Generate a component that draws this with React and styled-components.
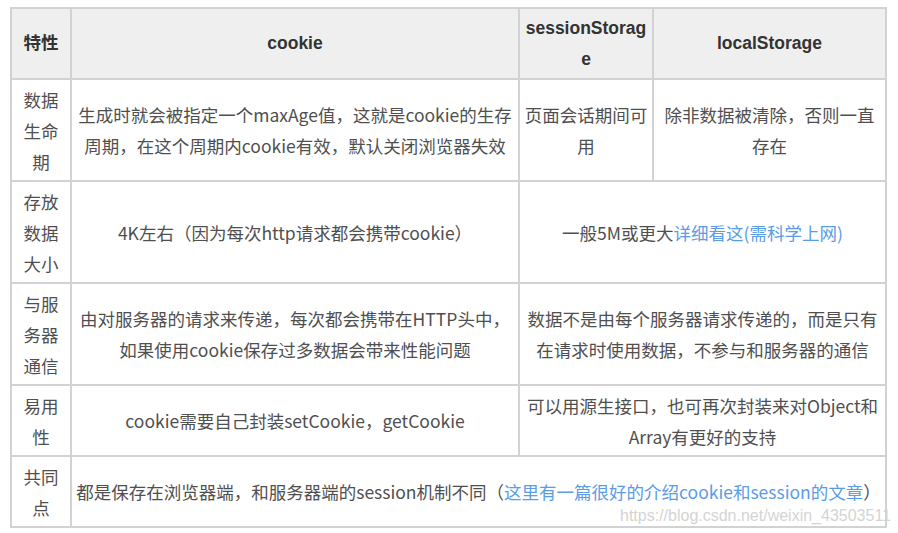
import React from "react";
import styled, { createGlobalStyle } from "styled-components";

const GlobalStyle = createGlobalStyle`
  html, body { margin: 0; padding: 0; background: #ffffff; }
  body { font-family: "Noto Sans CJK SC", sans-serif; }
`;

const Page = styled.div`
  position: relative;
  width: 898px;
  height: 533px;
  padding: 7px 0 0 10px;
  box-sizing: border-box;
  overflow: hidden;
`;

const Table = styled.table`
  width: 875px;
  table-layout: fixed;
  border-collapse: collapse;
  border: 2px solid #d2d2d2;
  font-size: 17.5px;
  line-height: 31px;
  color: #4f4f4f;
`;

const HeadCell = styled.th`
  background: #efefef;
  border: 2px solid #d2d2d2;
  padding: 3.5px 4px;
  text-align: center;
  vertical-align: middle;
  font-family: "Liberation Sans", "Noto Sans CJK SC", sans-serif;
  font-weight: bold;
  color: #333333;
  word-break: break-all;
`;

const Cell = styled.td`
  border: 2px solid #d2d2d2;
  padding: 3.5px 4px;
  text-align: center;
  vertical-align: middle;
  font-family: "Noto Sans CJK SC", sans-serif;
  color: #4f4f4f;
`;

const Link = styled.a`
  color: #5a9ce6;
  text-decoration: none;
`;

const Watermark = styled.div`
  position: absolute;
  left: 620px;
  top: 507px;
  font-family: "Liberation Sans", Arial, sans-serif;
  font-size: 16px;
  line-height: 17px;
  color: #d4d4d4;
  white-space: nowrap;
  pointer-events: none;
`;

export default function App() {
  return (
    <>
      <GlobalStyle />
      <Page>
        <Table>
          <colgroup>
            <col style={{ width: 60 }} />
            <col style={{ width: 448 }} />
            <col style={{ width: 134 }} />
            <col style={{ width: 233 }} />
          </colgroup>
          <thead>
            <tr>
              <HeadCell>特性</HeadCell>
              <HeadCell>cookie</HeadCell>
              <HeadCell>sessionStorage</HeadCell>
              <HeadCell>localStorage</HeadCell>
            </tr>
          </thead>
          <tbody>
            <tr>
              <Cell>数据生命期</Cell>
              <Cell>生成时就会被指定一个maxAge值，这就是cookie的生存周期，在这个周期内cookie有效，默认关闭浏览器失效</Cell>
              <Cell>页面会话期间可用</Cell>
              <Cell>除非数据被清除，否则一直存在</Cell>
            </tr>
            <tr>
              <Cell>存放数据大小</Cell>
              <Cell>4K左右（因为每次http请求都会携带cookie）</Cell>
              <Cell colSpan={2}>
                一般5M或更大<Link href="#">详细看这(需科学上网)</Link>
              </Cell>
            </tr>
            <tr>
              <Cell>与服务器通信</Cell>
              <Cell>由对服务器的请求来传递，每次都会携带在HTTP头中，如果使用cookie保存过多数据会带来性能问题</Cell>
              <Cell colSpan={2}>数据不是由每个服务器请求传递的，而是只有在请求时使用数据，不参与和服务器的通信</Cell>
            </tr>
            <tr>
              <Cell>易用性</Cell>
              <Cell>cookie需要自己封装setCookie，getCookie</Cell>
              <Cell colSpan={2}>可以用源生接口，也可再次封装来对Object和Array有更好的支持</Cell>
            </tr>
            <tr>
              <Cell>共同点</Cell>
              <Cell colSpan={3}>
                都是保存在浏览器端，和服务器端的session机制不同（<Link href="#">这里有一篇很好的介绍cookie和session的文章</Link>）
              </Cell>
            </tr>
          </tbody>
        </Table>
        <Watermark>https://blog.csdn.net/weixin_43503511</Watermark>
      </Page>
    </>
  );
}
